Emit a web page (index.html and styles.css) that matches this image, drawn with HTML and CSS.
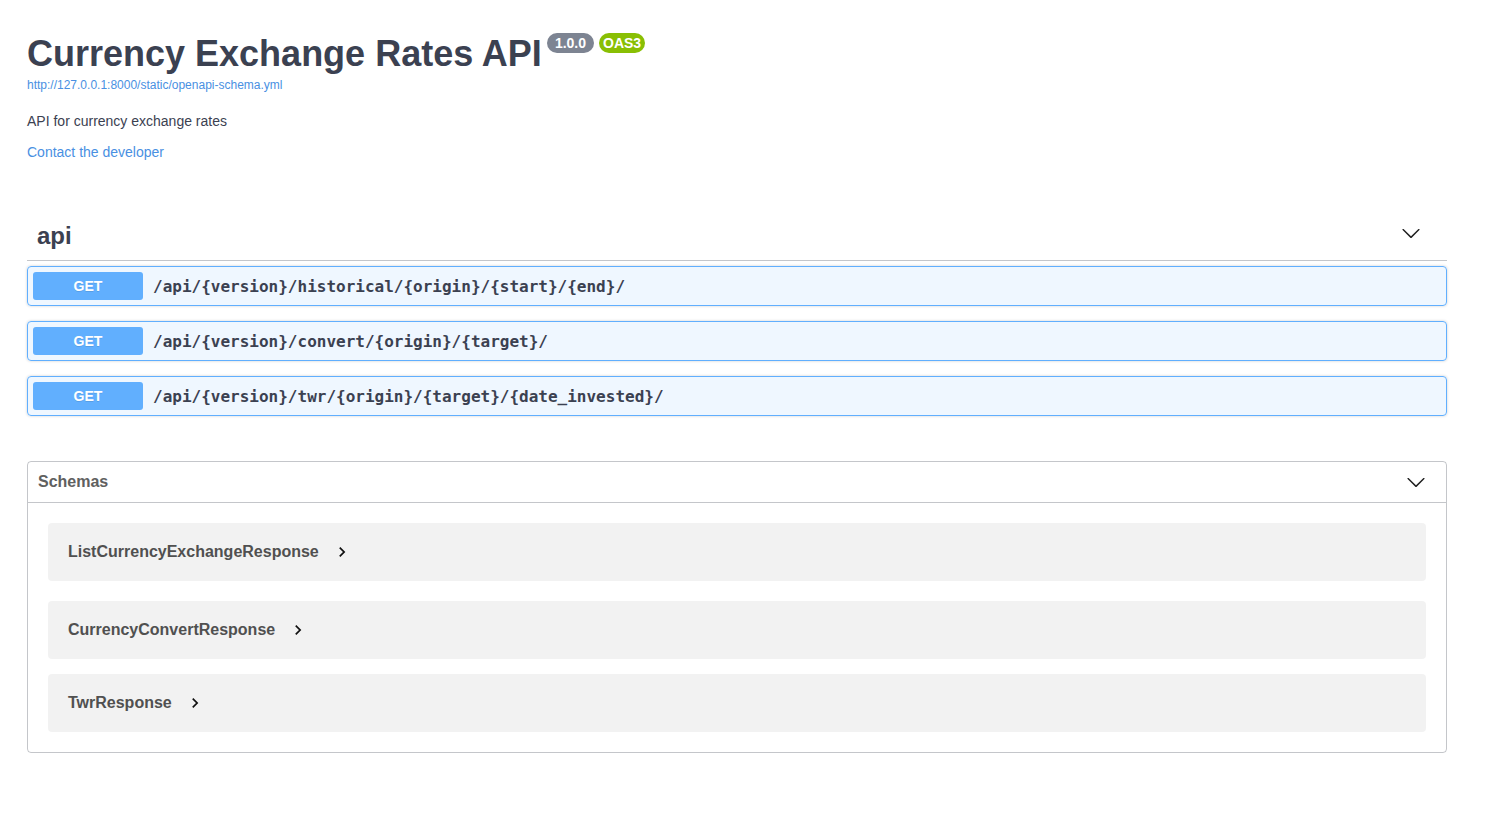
FILE: index.html
```html
<!DOCTYPE html>
<html>
<head>
<meta charset="utf-8">
<link rel="stylesheet" href="styles.css">
</head>
<body>
<div class="wrapper">
  <div class="info">
    <div class="title-row">
      <h2 class="title">Currency Exchange Rates API</h2>
      <span class="badge">1.0.0</span>
      <span class="badge oas">OAS3</span>
    </div>
    <a class="base-url" href="#">http://127.0.0.1:8000/static/openapi-schema.yml</a>
    <p class="desc">API for currency exchange rates</p>
    <a class="contact" href="#">Contact the developer</a>
  </div>

  <div class="tag-section">
    <h3 class="tag">
      <span>api</span>
      <svg class="chev tag-chev" width="20" height="20" viewBox="0 0 20 20"><path d="M17.418 6.109c.272-.268.709-.268.979 0s.271.701 0 .969l-7.908 7.83c-.27.268-.707.268-.979 0l-7.908-7.83c-.27-.268-.27-.701 0-.969.271-.268.709-.268.979 0L10 13.25l7.418-7.141z"/></svg>
    </h3>
    <div class="opblock"><span class="method">GET</span><span class="path">/api/{version}/historical/{origin}/{start}/{end}/</span></div>
    <div class="opblock"><span class="method">GET</span><span class="path">/api/{version}/convert/{origin}/{target}/</span></div>
    <div class="opblock"><span class="method">GET</span><span class="path">/api/{version}/twr/{origin}/{target}/{date_invested}/</span></div>
  </div>

  <section class="models">
    <h4 class="models-head">
      <span>Schemas</span>
      <svg class="chev" width="20" height="20" viewBox="0 0 20 20"><path d="M17.418 6.109c.272-.268.709-.268.979 0s.271.701 0 .969l-7.908 7.83c-.27.268-.707.268-.979 0l-7.908-7.83c-.27-.268-.27-.701 0-.969.271-.268.709-.268.979 0L10 13.25l7.418-7.141z"/></svg>
    </h4>
    <div class="model first"><span class="model-title">ListCurrencyExchangeResponse</span><svg class="toggle" width="20" height="20" viewBox="0 0 24 24"><path d="M10 6L8.59 7.41 13.17 12l-4.58 4.59L10 18l6-6z"/></svg></div>
    <div class="model"><span class="model-title">CurrencyConvertResponse</span><svg class="toggle" width="20" height="20" viewBox="0 0 24 24"><path d="M10 6L8.59 7.41 13.17 12l-4.58 4.59L10 18l6-6z"/></svg></div>
    <div class="model last"><span class="model-title">TwrResponse</span><svg class="toggle" width="20" height="20" viewBox="0 0 24 24"><path d="M10 6L8.59 7.41 13.17 12l-4.58 4.59L10 18l6-6z"/></svg></div>
  </section>
</div>
</body>
</html>
```

FILE: styles.css
```css
html, body {
  margin: 0;
  padding: 0;
  background: #fff;
  font-family: "Liberation Sans", Arial, sans-serif;
  color: #3b4151;
}

.wrapper {
  width: 1420px;
  padding-left: 27px;
}

.info {
  padding-top: 30px;
  display: flex;
  flex-direction: column;
  align-items: flex-start;
}

.title-row {
  display: flex;
  align-items: flex-start;
}

.title {
  margin: 3px 0 0;
  font-size: 36px;
  line-height: 41px;
  font-weight: 700;
  color: #3b4151;
}

.badge {
  margin-top: 3px;
  margin-left: 5px;
  height: 20px;
  line-height: 20px;
  padding: 0 8px;
  border-radius: 57px;
  background: #7d8492;
  color: #fff;
  font-size: 14px;
  font-weight: 700;
}

.badge.oas {
  background: #89bf04;
  padding: 0 4px;
}

.base-url {
  margin-top: 4px;
  font-size: 12px;
  line-height: 14px;
  color: #4990e2;
  text-decoration: none;
}

.desc {
  margin: 21px 0 0;
  font-size: 14px;
  line-height: 16px;
  color: #3b4151;
}

.contact {
  margin-top: 15px;
  font-size: 14px;
  line-height: 16px;
  color: #4990e2;
  text-decoration: none;
}

.tag-section {
  margin-top: 52px;
}

.tag {
  margin: 0 0 5px;
  display: flex;
  align-items: center;
  justify-content: space-between;
  padding: 10px 26px 11px 10px;
  font-size: 24px;
  line-height: 27px;
  font-weight: 700;
  color: #3b4151;
  border-bottom: 1px solid rgba(59, 65, 81, 0.3);
}

.chev {
  fill: #1f1f1f;
  display: block;
}

.tag-chev {
  margin-bottom: 5px;
}

.opblock {
  display: flex;
  align-items: center;
  padding: 5px;
  margin-bottom: 15px;
  border: 1px solid #61affe;
  border-radius: 4px;
  background: rgba(97, 175, 254, 0.1);
  box-shadow: 0 0 3px rgba(0, 0, 0, 0.19);
}

.method {
  width: 110px;
  padding: 6px 0;
  line-height: 16px;
  text-align: center;
  font-size: 14px;
  font-weight: 700;
  color: #fff;
  background: #61affe;
  border-radius: 3px;
  text-shadow: 0 1px 0 rgba(0, 0, 0, 0.1);
}

.path {
  padding: 0 10px;
  font-family: "DejaVu Sans Mono", monospace;
  font-size: 16px;
  font-weight: 700;
  color: #3b4151;
}

.models {
  margin-top: 45px;
  border: 1px solid rgba(59, 65, 81, 0.3);
  border-radius: 4px;
  padding-bottom: 20px;
}

.models-head {
  margin: 0;
  display: flex;
  align-items: center;
  justify-content: space-between;
  padding: 10px 20px 10px 10px;
  font-size: 16px;
  line-height: 20px;
  font-weight: 700;
  color: #606060;
  border-bottom: 1px solid rgba(59, 65, 81, 0.3);
}

.model {
  display: flex;
  align-items: center;
  margin: 0 20px 15px;
  padding: 19px 20px;
  background: rgba(0, 0, 0, 0.05);
  border-radius: 4px;
}

.model.first {
  margin: 20px;
}

.model.last {
  margin-bottom: 0;
}

.model-title {
  font-size: 16px;
  line-height: 20px;
  font-weight: 700;
  color: #505050;
}

.toggle {
  display: block;
  margin-left: 13px;
  fill: #111;
}
```
